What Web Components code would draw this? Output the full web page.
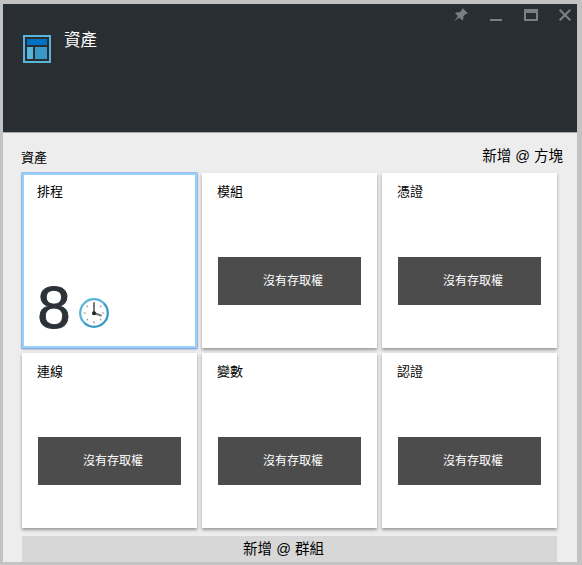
<!DOCTYPE html>
<html lang="zh-Hant">
<head>
<meta charset="utf-8">
<title>資產</title>
<style>
html,body{margin:0;height:100%}
body{background:#c3c3c3;overflow:hidden;font-family:"Liberation Sans","Noto Sans CJK TC",sans-serif}
</style>
</head>
<body>
<asset-blade>
  <blade-header slot="header">資產</blade-header>
  <section-bar slot="section">資產<span slot="action">新增 @ 方塊</span></section-bar>
  <asset-tile selected>排程<count-clock slot="body">8</count-clock></asset-tile>
  <asset-tile>模組<access-note slot="body">沒有存取權</access-note></asset-tile>
  <asset-tile>憑證<access-note slot="body">沒有存取權</access-note></asset-tile>
  <asset-tile>連線<access-note slot="body">沒有存取權</access-note></asset-tile>
  <asset-tile>變數<access-note slot="body">沒有存取權</access-note></asset-tile>
  <asset-tile>認證<access-note slot="body">沒有存取權</access-note></asset-tile>
  <group-bar slot="footer">新增 @ 群組</group-bar>
</asset-blade>
<script>
const define = (name, html) => customElements.define(name, class extends HTMLElement {
  constructor() {
    super();
    this.attachShadow({mode: 'open'}).innerHTML = html;
  }
});

define('asset-blade', `<style>
:host{display:block;box-sizing:border-box;width:582px;height:565px;padding:4px 5px 3px 3px;background:#c3c3c3}
main{height:558px;background:#ededed;overflow:hidden;display:flex;flex-direction:column}
.grid{display:grid;grid-template-columns:repeat(3,175px);grid-auto-rows:175px;gap:5px;margin:0 0 8px 19px}
</style><main><slot name="header"></slot><slot name="section"></slot><div class="grid"><slot></slot></div><slot name="footer"></slot></main>`);

define('blade-header', `<style>
:host{display:flex;box-sizing:border-box;height:129px;flex:none;background:#292e32;border-bottom:1px solid #aaa;color:#fff}
.logo{width:28px;height:28px;margin:31px 0 0 20px;flex:none}
.title{font-size:16.5px;line-height:24px;margin:24px 0 0 13px}
.tools{margin-left:auto;width:124px;height:22px}
</style>
<svg class="logo" viewBox="0 0 28 28"><path d="M0 0h28v28H0z" fill="#59b4d9"/><path d="M2 2h24v24H2z" fill="#292e32"/><path d="M4 4h20v6H4z" fill="#0072c6"/><path d="M4 12h6v12H4z" fill="#59b4d9"/><path d="M12 12h12v12H12z" fill="#3999c6"/></svg>
<div class="title"><slot></slot></div>
<svg class="tools" viewBox="453 4 124 22" fill="none" stroke="#7b7f82">
<path fill="#7b7f82" stroke="none" d="M462.6 8.2l5.3 5.1-1.6.8-.8-.1-2.2 2.4c.4 1.7-.1 3-1 4.1l-3-2.9-5.1 3.7 3.8-5.2-3-2.8c1.3-1 2.7-1.3 4-.9l2.9-2.2-.1-1z"/>
<path d="M490 20h12" stroke-width="2"/>
<path d="M525 10v10h12V10" stroke-width="2"/><path d="M524 11h14" stroke-width="4"/>
<path d="M559.7 9.7l10.6 10.6M570.3 9.7l-10.6 10.6" stroke-width="2"/></svg>`);

define('section-bar', `<style>
:host{display:flex;box-sizing:border-box;height:40px;flex:none;padding:0 14px 0 18px;justify-content:space-between;color:#000;font-size:13px}
.name{line-height:20px;margin-top:15px}
.act{font-size:14.5px;line-height:20px;margin-top:13px;white-space:nowrap}
</style><span class="name"><slot></slot></span><span class="act"><slot name="action"></slot></span>`);

define('asset-tile', `<style>
:host{display:block;box-sizing:border-box;width:175px;height:175px;background:#fff;color:#000;box-shadow:0 2px 3px rgba(0,0,0,.36);overflow:hidden}
:host([selected]){box-shadow:inset 0 0 0 2px #99d0f8,0 0 0 .7px #80aeea,0 1px 2px rgba(40,80,150,.65)}
.label{font-size:13px;line-height:20px;height:20px;padding:9px 15px 0}
.body{height:146px}
</style><div class="label"><slot></slot></div><div class="body"><slot name="body"></slot></div>`);

define('access-note', `<style>
:host{display:flex;width:143px;height:48px;margin:55px 16px 0;background:#4c4c4c;color:#fff;font-size:12px;align-items:center;justify-content:center;box-sizing:border-box;padding:0 0 3px 7px}
</style><span><slot></slot></span>`);

define('count-clock', `<style>
:host{display:flex;height:56px;padding:76px 0 0 15px;color:#2d3239;align-items:center}
.num{font:60px/56px "Liberation Sans",sans-serif;-webkit-text-stroke:.9px #2d3239;width:34px;padding-top:4px;display:flex;justify-content:center}
svg{width:30px;height:30px;margin:14px 0 0 8px}
</style><span class="num"><slot></slot></span>
<svg viewBox="0 0 30 30"><defs><linearGradient id="ring" x1="0" y1="0" x2="1" y2="1"><stop offset=".5" stop-color="#59b4d9"/><stop offset=".5" stop-color="#3999c6"/></linearGradient></defs><circle cx="15" cy="15" r="13.8" fill="#fff" stroke="url(#ring)" stroke-width="2.3"/>
<path d="M15 23v2.4M4.5 15h2.4M23 15h2.4M7.6 7.6l1.4 1.4M22.4 7.6L21 9M7.6 22.4L9 21M22.4 22.4L21 21" stroke="#9a9a9a" stroke-width="1.2"/>
<path d="M15 15V4.3M15 15l7.6 2.7" stroke="#767676" stroke-width="2"/><circle cx="15" cy="15.3" r="2" fill="#222"/></svg>`);

define('group-bar', `<style>
:host{display:flex;justify-content:center;width:535px;height:26px;margin-left:19px;background:#d7d7d7;color:#000;font-size:14.5px;line-height:26px;white-space:nowrap;box-sizing:border-box;padding-right:12px}
</style><span><slot></slot></span>`);
</script>
</body>
</html>
